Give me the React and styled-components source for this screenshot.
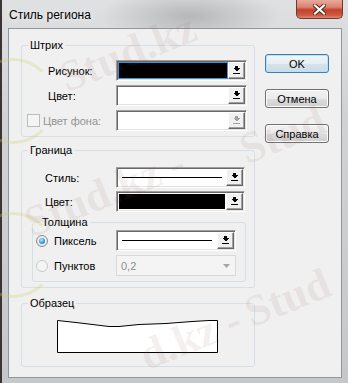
import React from "react";
import styled, { createGlobalStyle } from "styled-components";

const GlobalStyle = createGlobalStyle`
  html, body {
    margin: 0;
    padding: 0;
  }
  body {
    width: 348px;
    height: 383px;
    overflow: hidden;
    font-family: "Liberation Sans", Arial, sans-serif;
  }
`;

const Window = styled.div`
  position: relative;
  width: 348px;
  height: 383px;
  display: flex;
  flex-direction: column;
  overflow: hidden;
  background:
    linear-gradient(90deg, #3b3334 0, #3b3334 2px, transparent 2px),
    radial-gradient(ellipse 90px 28px at 190px 16px, rgba(110, 110, 110, 0.35), transparent),
    linear-gradient(180deg, #dfe0e1 0%, #d0d2d4 30%, #c5c7c9 100%);
`;

const TitleBar = styled.div`
  height: 28px;
  display: flex;
  justify-content: space-between;
  align-items: flex-start;
`;

const Title = styled.span`
  margin: 7px 0 0 9px;
  font-size: 12px;
  line-height: 16px;
  color: #000;
  text-shadow: 0 0 6px rgba(255, 255, 255, 0.9);
`;

const CloseButton = styled.div`
  width: 47px;
  height: 19px;
  margin-right: 5px;
  box-sizing: border-box;
  border: 1px solid #6d3a34;
  border-top: none;
  border-radius: 0 0 5px 5px;
  background: linear-gradient(180deg, #e9a99c 0%, #d9826f 40%, #c2402a 55%, #cf5a44 85%, #e08a74 100%);
  display: flex;
  align-items: center;
  justify-content: center;
`;

const Client = styled.div`
  flex: 1;
  margin: 0 6px 5px 8px;
  border: 1px solid #8f979e;
  background: #f0f0f0;
  display: flex;
  gap: 10px;
  padding: 10px 0 0 12px;
`;

const LeftColumn = styled.div`
  width: 234px;
  display: flex;
  flex-direction: column;
`;

const Group = styled.fieldset`
  margin: ${(p) => p.$mt || 0}px ${(p) => p.$mr || 0}px 0 ${(p) => p.$ml || 0}px;
  padding: 0;
  min-width: 0;
  border: 1px solid #d5dfe5;
  border-radius: 3px;
`;

const Legend = styled.legend`
  margin-left: ${(p) => p.$ml || 6}px;
  padding: 0 2px;
  font-size: 11px;
  line-height: 13px;
  color: #000;
`;

const Rows = styled.div`
  display: flex;
  flex-direction: column;
  gap: ${(p) => p.$gap}px;
  padding: ${(p) => p.$pt}px 0 ${(p) => p.$pb}px;
`;

const Row = styled.div`
  display: grid;
  grid-template-columns: ${(p) => p.$col}px auto;
  align-items: center;
  height: 21px;
`;

const Label = styled.span`
  display: flex;
  align-items: center;
  gap: ${(p) => p.$gap || 0}px;
  padding-left: ${(p) => p.$pl}px;
  font-size: 11px;
  color: ${(p) => (p.$disabled ? "#939393" : "#000")};
`;

const Combo = styled.div`
  width: ${(p) => p.$w}px;
  height: 21px;
  box-sizing: border-box;
  display: flex;
  padding: 1px;
  border: 1px solid;
  border-color: #a0a0a0 #ffffff #ffffff #a0a0a0;
  box-shadow: inset 1px 1px 0 #696969, inset -1px -1px 0 #e3e3e3;
  background: #fff;
`;

const Field = styled.div`
  flex: 1;
  display: flex;
  align-items: center;
  box-sizing: border-box;
  margin: ${(p) => (p.$focus ? 0 : 1)}px;
  border: ${(p) => (p.$focus ? "1px solid #3d92dc" : "none")};
  background: ${(p) => (p.$black ? "#000" : "#fff")};
`;

const LineSample = styled.div`
  flex: 1;
  margin: 0 ${(p) => p.$mr}px 0 3px;
  border-top: 1px solid #000;
`;

const DropButton = styled.div`
  width: 17px;
  box-sizing: border-box;
  border: 1px solid;
  border-color: #ffffff #696969 #696969 #ffffff;
  box-shadow: inset -1px -1px 0 #a0a0a0;
  background: #f0f0f0;
  display: flex;
  align-items: center;
  justify-content: center;
`;

const FlatCombo = styled.div`
  width: ${(p) => p.$w}px;
  height: 21px;
  box-sizing: border-box;
  display: flex;
  align-items: center;
  justify-content: space-between;
  padding: 0 5px 0 4px;
  border: 1px solid #d9d9d9;
  background: #f4f4f4;
  font-size: 11px;
  color: #8d8d8d;
`;

const Checkbox = styled.span`
  width: 13px;
  height: 13px;
  box-sizing: border-box;
  border: 1px solid #bcbcbc;
  background: #f4f4f4;
`;

const Radio = styled.span`
  width: 12px;
  height: 12px;
  box-sizing: border-box;
  border-radius: 50%;
  border: 1px solid ${(p) => (p.$disabled ? "#c9c9c9" : "#8a8c8e")};
  background: ${(p) =>
    p.$disabled ? "#f4f4f4" : "radial-gradient(circle at 50% 45%, #fff, #dcdcdc)"};
  display: flex;
  align-items: center;
  justify-content: center;
`;

const RadioDot = styled.span`
  width: 6px;
  height: 6px;
  border-radius: 50%;
  background: radial-gradient(circle at 40% 35%, #bfe6ff 0%, #3b9ae0 55%, #1b5f9c 100%);
`;

const Sample = styled.div`
  display: flex;
  justify-content: center;
  padding: 9px 0 12px;
`;

const ButtonColumn = styled.div`
  display: flex;
  flex-direction: column;
  gap: 16px;
  padding-top: 15px;
`;

const PushButton = styled.div`
  width: 64px;
  height: 19px;
  box-sizing: border-box;
  border: 1px solid ${(p) => (p.$default ? "#3c7fb1" : "#707070")};
  border-radius: 3px;
  background: ${(p) =>
    p.$default
      ? "linear-gradient(180deg, #f1f6f9 0%, #e6eef3 50%, #d6e3eb 51%, #cbdbe5 100%)"
      : "linear-gradient(180deg, #f2f2f2 0%, #ebebeb 50%, #dddddd 51%, #cfcfcf 100%)"};
  box-shadow: inset 0 0 0 1px ${(p) => (p.$default ? "#b9e2f7" : "#fcfcfc")};
  display: flex;
  align-items: center;
  justify-content: center;
  font-size: 11px;
  color: #000;
`;

const Watermark = styled.div`
  position: absolute;
  inset: 0;
  pointer-events: none;
  overflow: hidden;
`;

const WatermarkText = styled.span`
  position: absolute;
  white-space: nowrap;
  transform-origin: 0 100%;
  transform: rotate(-22deg);
  font-family: "Liberation Serif", "Times New Roman", serif;
  font-weight: bold;
  font-size: 44px;
  line-height: 44px;
  color: rgba(150, 95, 95, 0.1);
`;

const LogoRing = styled.span`
  position: absolute;
  width: 80px;
  height: 80px;
  border-radius: 50%;
  border: 3px solid rgba(210, 210, 110, 0.3);
  border-right-color: transparent;
`;

function DropIcon({ disabled }) {
  const c = disabled ? "#a0a0a0" : "#000";
  return (
    <svg width="7" height="9" viewBox="0 0 7 9" shapeRendering="crispEdges">
      <rect x="2" y="0" width="3" height="2" fill={c} />
      <polygon points="0,2 7,2 3.5,5.5" fill={c} />
      <rect x="0" y="7" width="7" height="1" fill={c} />
    </svg>
  );
}

function CloseIcon() {
  return (
    <svg width="13" height="11" viewBox="0 0 13 11">
      <path d="M2 1.5 L11 9.5 M11 1.5 L2 9.5" stroke="#4a2620" strokeWidth="4" strokeLinecap="square" />
      <path d="M2 1.5 L11 9.5 M11 1.5 L2 9.5" stroke="#fff" strokeWidth="2.2" strokeLinecap="square" />
    </svg>
  );
}

function ColorCombo({ w, black, focus, disabled }) {
  return (
    <Combo $w={w}>
      <Field $black={black} $focus={focus} />
      <DropButton>
        <DropIcon disabled={disabled} />
      </DropButton>
    </Combo>
  );
}

function LineCombo({ w, mr }) {
  return (
    <Combo $w={w}>
      <Field>
        <LineSample $mr={mr} />
      </Field>
      <DropButton>
        <DropIcon />
      </DropButton>
    </Combo>
  );
}

// faint site watermark laid over the screenshot
const marks = [
  { text: "Stud.kz", left: 70, top: 56 },
  { text: "Stud.kz -", left: 35, top: 201 },
  { text: "Stud", left: 250, top: 128 },
  { text: "d.kz -", left: 150, top: 334 },
  { text: "Stud", left: 255, top: 291 },
];

export default function App() {
  return (
    <>
      <GlobalStyle />
      <Window>
        <TitleBar>
          <Title>Стиль региона</Title>
          <CloseButton>
            <CloseIcon />
          </CloseButton>
        </TitleBar>
        <Client>
          <LeftColumn>
            <Group>
              <Legend>Штрих</Legend>
              <Rows $gap={4} $pt={8} $pb={5}>
                <Row $col={94}>
                  <Label $pl={26}>Рисунок:</Label>
                  <ColorCombo w={131} black focus />
                </Row>
                <Row $col={94}>
                  <Label $pl={26}>Цвет:</Label>
                  <ColorCombo w={131} />
                </Row>
                <Row $col={94}>
                  <Label $pl={5} $gap={3} $disabled>
                    <Checkbox />
                    Цвет фона:
                  </Label>
                  <ColorCombo w={131} disabled />
                </Row>
              </Rows>
            </Group>

            <Group $mt={7}>
              <Legend>Граница</Legend>
              <Rows $gap={3} $pt={10} $pb={0}>
                <Row $col={94}>
                  <Label $pl={23}>Стиль:</Label>
                  <LineCombo w={129} mr={3} />
                </Row>
                <Row $col={94}>
                  <Label $pl={23}>Цвет:</Label>
                  <ColorCombo w={129} black />
                </Row>
              </Rows>
              <Group $mt={4} $ml={10} $mr={8}>
                <Legend $ml={7}>Толщина</Legend>
                <Rows $gap={4} $pt={1} $pb={5}>
                  <Row $col={83}>
                    <Label $pl={3} $gap={6}>
                      <Radio>
                        <RadioDot />
                      </Radio>
                      Пиксель
                    </Label>
                    <LineCombo w={120} mr={4} />
                  </Row>
                  <Row $col={83}>
                    <Label $pl={3} $gap={6}>
                      <Radio $disabled />
                      Пунктов
                    </Label>
                    <FlatCombo $w={120}>
                      0,2
                      <svg width="7" height="4" viewBox="0 0 7 4">
                        <polygon points="0,0 7,0 3.5,4" fill="#a5a5a5" />
                      </svg>
                    </FlatCombo>
                  </Row>
                </Rows>
              </Group>
              <Rows $gap={0} $pt={5} $pb={0} />
            </Group>

            <Group $mt={9}>
              <Legend>Образец</Legend>
              <Sample>
                <svg width="162" height="35" viewBox="0 0 162 35">
                  <path
                    d="M0.5 1.5 L19 3.5 L52 7.5 L62 7.5 L82 5.5 L109 4.5 L135 2.5 L152 1.5 L160.5 1.5 L160.5 33.5 L0.5 33.5 Z"
                    fill="#fff"
                    stroke="#000"
                    strokeWidth="1"
                  />
                </svg>
              </Sample>
            </Group>
          </LeftColumn>

          <ButtonColumn>
            <PushButton $default>OK</PushButton>
            <PushButton>Отмена</PushButton>
            <PushButton>Справка</PushButton>
          </ButtonColumn>
        </Client>

        <Watermark>
          <LogoRing style={{ left: -30, top: 58 }} />
          <LogoRing style={{ left: -30, top: 212 }} />
          {marks.map((m, i) => (
            <WatermarkText key={i} style={{ left: m.left, top: m.top }}>
              {m.text}
            </WatermarkText>
          ))}
        </Watermark>
      </Window>
    </>
  );
}
